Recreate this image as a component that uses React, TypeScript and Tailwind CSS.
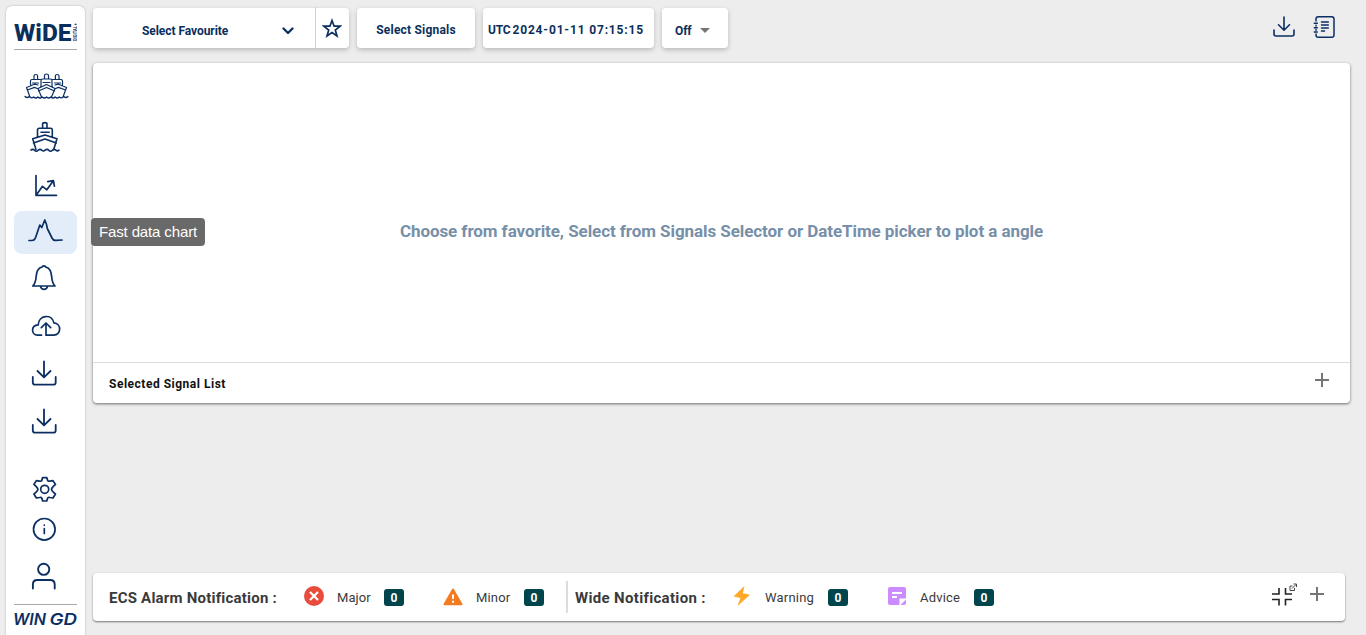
import type { ReactNode } from "react";

type IconProps = { box: string; w: number; h: number; children: ReactNode; sw?: number };

function Icon({ box, w, h, children, sw = 1.8 }: IconProps) {
  return (
    <svg
      width={w}
      height={h}
      viewBox={box}
      className="block shrink-0"
      fill="none"
      stroke="#0b2f63"
      strokeWidth={sw}
      strokeLinecap="round"
      strokeLinejoin="round"
    >
      {children}
    </svg>
  );
}

function Download() {
  return (
    <Icon box="0 0 63 48" w={63} h={48}>
      <path d="M30 11.500v15.500M23.500 21l6.500 6.300l6.500-6.300M18.800 27v5.500q0 2.200 2.200 2.200h18.500q2.200 0 2.200-2.200v-5.500" />
    </Icon>
  );
}

function Plus() {
  return (
    <svg width="14" height="14" viewBox="0 0 14 14" className="block shrink-0">
      <path d="M7 0v14M0 7h14" stroke="#757575" strokeWidth="2" />
    </svg>
  );
}

function Count() {
  return (
    <span className="flex h-[17px] w-5 shrink-0 items-center justify-center rounded-[3px] bg-[#00454b] pt-px text-[12px] font-bold text-white">
      0
    </span>
  );
}

function Sidebar() {
  return (
    <nav className="flex h-[640px] w-[79px] shrink-0 flex-col items-center rounded-md bg-white shadow-[0_0_2px_rgba(0,0,0,0.3)]">
      <svg width="63" height="43" viewBox="14 6 63 43" className="block shrink-0" fill="#0b2f5c" fontFamily="Roboto, sans-serif">
        <text x="14" y="40.800" fontSize="24.800" fontWeight="800" textLength="57.500" lengthAdjust="spacingAndGlyphs">WiDE</text>
        <text transform="translate(76.600 41) rotate(-90)" fontSize="5" fontWeight="700" textLength="18" lengthAdjust="spacingAndGlyphs">DIGITAL +</text>
      </svg>
      <div className="h-px w-[63px] shrink-0 bg-[#a9a9a9]" />
      <Icon box="14 50 63 62" w={63} h={62} sw={1.200}>
        <path d="M44.500 79v-3.500q0-1.500 2-1.500t2 1.500V79M41 87v-6.500q0-1.500 1.500-1.500h8q1.500 0 1.500 1.500V87M43 82.500h7M46.500 84.500l-8.500 4l3.500 8.500M46.500 84.500l8.500 4l-3.500 8.500M38.500 91l8-3.500l8 3.500" />
        <path d="M34 79v-3q0-1.500 1.800-1.500t1.800 1.500v3M30.500 86v-5q0-1.500 1.500-1.500h8.500M32.500 83h6M38 85l-3.500-.8l-8 3.300l3.300 9M27.500 90l7-2.600l3.500 1.300" />
        <path d="M59 79v-3q0-1.500-1.800-1.500t-1.800 1.500v3M62.500 86v-5q0-1.500-1.500-1.500h-8.500M60.500 83h-6M55 85l3.500-.8l8 3.300l-3.300 9M65.500 90l-7-2.600l-3.500 1.300" />
        <path d="M25 96.500q2 2 4.300 0q2.200 2.500 4.300.5q2.200 2 4.300 0q2.200 2 4.300 0q2.200 2 4.300 0q2.200 2 4.300 0q2.200 2 4.300 0q2.200 2 4.300 0q2.200 2 4.300-.5q2.300 2 4.300 0" />
      </Icon>
      <Icon box="14 112 63 51" w={63} h={51} sw={1.600}>
        <path d="M42.600 128v-4q0-1.400 2.200-1.400t2.200 1.400v4M37.500 137v-7q0-1.800 1.800-1.800h11.200q1.800 0 1.800 1.800v7M41 132.300h8.200M36 149.500l-3.300-10.700L45 135l12 3.800l-3.300 10.700M33.500 143L45 139l11.300 4" />
        <path d="M31 150q2-1.500 3.500.2q1.800 2 3.700 0q1.800-1.600 3.500 0q1.800 1.600 3.500 0q1.800-1.600 3.500 0q1.800 2 3.700 0q1.800-1.600 3.500 0q1.500 1.300 3.100 0" />
      </Icon>
      <Icon box="14 163 63 48" w={63} h={48} sw={1.700}>
        <path d="M36 175.500V195.300H56.500M37 194l5.500-7.700l4.300 3.500l6.400-8.800M47.800 181.600l5.600-1l1 5.600" />
      </Icon>
      <div className="shrink-0 rounded-lg bg-[#e3edf9]">
        <Icon box="14 211 63 43" w={63} h={43} sw={1.700}>
          <path d="M29 240.500h3q2.500 0 3.700-3.300l4.100-12.200l2 2.500l3-7.500l1.700 4.500l.8 4l4.700 9.500q1.400 2.800 4 2.300l6-.3" />
        </Icon>
      </div>
      <Icon box="14 254 63 48" w={63} h={48} sw={1.700}>
        <path d="M32.800 286h22.200q-2.800-3-3.300-9c-.5-7-3.500-9.500-6-10q-.2-1.200-1.800-1.200t-1.800 1.200c-2.500.5-5.500 3-6 10q-.5 6-3.300 9M40.500 286.500q.8 2.800 3.500 2.800t3.500-2.800" />
      </Icon>
      <Icon box="14 302 63 48" w={63} h={48} sw={1.700}>
        <path d="M41.500 335.200h-4c-6.600-.4-6.800-9.700.7-10.300c.3-10 13.800-11.500 15.700-2c7.600.5 7.800 11.700-.3 12.300h-7.600V323.300M41.300 327.600l4.700-4.600l4.700 4.600" />
      </Icon>
      <Download />
      <Download />
      <Icon box="14 446 63 64" w={63} h={64} sw={1.700}>
        <circle cx="44.700" cy="489.300" r="4" />
        <path transform="translate(31.100 476.300) scale(1.133 1.083)" strokeWidth="1.570" d="M9.600 3.200L10.200 1.200H13.800L14.400 3.200Q14.800 5 16.500 4.400L19.300 4L21.500 7.500L19.600 9.300Q18 11 18 12Q18 13 19.600 14.700L21.500 16.500L19.300 20L16.500 19.600Q14.800 19 14.400 20.800L13.800 22.800H10.200L9.600 20.800Q9.200 19 7.500 19.600L4.700 20L2.500 16.500L4.400 14.700Q6 13 6 12Q6 11 4.400 9.300L2.500 7.500L4.700 4L7.500 4.400Q9.200 5 9.600 3.200Z" />
      </Icon>
      <Icon box="14 510 63 42" w={63} h={42} sw={1.700}>
        <circle cx="44.300" cy="529.300" r="10.800" />
        <path d="M44.300 528.500v5M44.300 525v.2" />
      </Icon>
      <Icon box="14 552 63 52" w={63} h={52} sw={1.900}>
        <circle cx="43.700" cy="569.300" r="5.600" />
        <path d="M32.900 588.500v-4q0-4.500 4.500-4.500h12.800q4.500 0 4.500 4.500v4" />
      </Icon>
      <div className="h-px w-[63px] shrink-0 bg-[#a9a9a9]" />
      <svg width="63" height="30" viewBox="14 605 63 30" className="block shrink-0" fill="#0b2f63" fontFamily="Inter, sans-serif">
        <text x="13" y="625" fontSize="16.300" fontWeight="600" fontStyle="italic" textLength="33" lengthAdjust="spacingAndGlyphs">WIN</text>
        <text x="49.500" y="625" fontSize="16.300" fontWeight="600" fontStyle="italic" textLength="27.500" lengthAdjust="spacingAndGlyphs">GD</text>
      </svg>
    </nav>
  );
}

const card = "flex h-10 shrink-0 items-center rounded bg-white shadow-[0_2px_5px_rgba(0,0,0,0.22)]";

function Toolbar() {
  return (
    <header className="flex h-[42px] items-start gap-2 text-[12px] font-bold text-[#0b2f5c]">
      <div className={card + " w-64"}>
        <div className="flex h-10 w-[222px] items-center pt-[5px] pl-[49px]">
          <span className="w-[139px] whitespace-nowrap tracking-[-0.06px]">Select Favourite</span>
          <Icon box="0 0 14 10" w={14} h={10} sw={2.300}><path d="M2.500 2.500l4.500 4.500l4.500-4.500" /></Icon>
        </div>
        <div className="h-[43px] w-px bg-[#d2d2d2]" />
        <div className="flex flex-1 justify-center pr-0.5">
          <svg width="20" height="20" viewBox="0 0 20 20" fill="none" stroke="#0b2f63" strokeWidth="1.700" strokeLinejoin="miter">
            <path d="M10 2.500l2.100 5.700h6l-4.800 3.800l1.700 6L10 14.600L5 18l1.700-6L1.900 8.200h6z" />
          </svg>
        </div>
      </div>
      <div className={card + " w-[118px] justify-center pt-[3px]"}><span className="whitespace-nowrap tracking-[0.2px]">Select Signals</span></div>
      <div className={card + " w-[171px] gap-[2px] pt-[3px] pl-[5px]"}>
        <span className="tracking-[-0.2px]">UTC</span>
        <span className="whitespace-nowrap text-[12px] tracking-[0.84px]">2024-01-11 07:15:15</span>
      </div>
      <div className={card + " w-[66px] gap-[9px] pt-[5px] pl-[13px]"}>
        <span className="w-[16px] tracking-[-0.1px]">Off</span>
        <svg width="10" height="5" viewBox="0 0 10 5"><path d="M0 0h10L5 5z" fill="#757575" /></svg>
      </div>
      <div className="ml-auto flex gap-[14px] pt-[5px] pr-[29px]">
        <Icon box="0 0 26 28" w={26} h={28} sw={1.600}>
          <path d="M13 4v13M7.500 11.800l5.500 5.400l5.500-5.400M3 17v4q0 2 2 2h16q2 0 2-2v-4" />
        </Icon>
        <Icon box="0 0 26 28" w={26} h={28} sw={1.500}>
          <path d="M5 8V6q0-2.300 2.300-2.300h13.400Q23 3.700 23 6v16q0 2.300-2.300 2.300H7.300Q5 24.300 5 22v-1M5 12.300v.8M5 16.500v.8M3.300 10.300h3M3.300 14.800h3M3.300 19h3M10.500 9h6.800M10.500 12h6.800M10.500 15h6.800M10.500 18h3" />
        </Icon>
      </div>
    </header>
  );
}

function NotificationBar() {
  return (
    <footer className="flex h-12 w-[1252px] shrink-0 items-center rounded bg-white pl-4 text-[13px] text-[#3a3a3a] shadow-[0_1px_2px_rgba(0,0,0,0.5)]">
      <strong className="w-[194px] pt-0.5 whitespace-nowrap text-[15px] tracking-[0.22px]">ECS Alarm Notification :</strong>
      <svg width="22" height="22" viewBox="0 0 22 22" className="mb-[3px]">
        <circle cx="11" cy="11" r="10" fill="#e84c3d" />
        <path d="M7 7l8 8M15 7l-8 8" stroke="#fff" strokeWidth="2.200" />
      </svg>
      <span className="ml-3 w-[47px] pt-0.5 tracking-[0.1px]">Major</span>
      <Count />
      <svg width="20" height="18" viewBox="0 0 20 18" className="ml-[39px]">
        <path d="M10 1.500L18.500 16.200h-17z" fill="#f47b20" stroke="#f47b20" strokeWidth="2" strokeLinejoin="round" />
        <path d="M10 6.500v4.500M10 12.700v2" stroke="#fff" strokeWidth="2" />
      </svg>
      <span className="ml-[13px] w-12 pt-0.5 tracking-[0.15px]">Minor</span>
      <Count />
      <div className="ml-[22px] h-8 w-0.5 bg-[#dcdcdc]" />
      <strong className="ml-[7px] w-[158px] pt-0.5 whitespace-nowrap text-[15px] tracking-[0.33px]">Wide Notification :</strong>
      <svg width="18" height="20" viewBox="0 0 18 20" className="mb-[3px]">
        <path d="M11.500 0L.5 10.500L7.500 12L4.500 20L17 8.800L9.800 7.300z" fill="#ffa726" />
      </svg>
      <span className="ml-3.5 w-[63px] pt-0.5 tracking-[0.2px]">Warning</span>
      <Count />
      <svg width="18" height="18" viewBox="0 0 18 18" className="mb-[3px] ml-10">
        <path d="M2 0h14q2 0 2 2v9l-7 7H2q-2 0-2-2V2q0-2 2-2z" fill="#cc8bff" />
        <path d="M4 6h10M4 10h5" stroke="#fff" strokeWidth="1.800" />
        <path d="M11.500 18v-6.500H18z" fill="#fff" />
        <path d="M12.500 18L18 12.500V16q0 2-2 2z" fill="#cc8bff" />
      </svg>
      <span className="ml-[14px] w-[54px] pt-0.5 tracking-[0.2px]">Advice</span>
      <Count />
      <svg width="28" height="26" viewBox="0 0 28 26" fill="none" className="mb-[3px] ml-auto">
        <path d="M1 11h7V5M21 11h-6.500V5M1 16.500h7v6M21 16.500h-6.500v6" stroke="#222" strokeWidth="1.600" />
        <path d="M21.500 3H19v4.500h4.500V5M21 5.500l4-4M22.500 1h3v3" stroke="#444" strokeWidth="1" />
      </svg>
      <div className="mr-[21px] mb-1.5 ml-[11px]"><Plus /></div>
    </footer>
  );
}

export default function App() {
  return (
    <div className="flex h-[635px] w-[1366px] gap-2 overflow-hidden bg-[#ededed] pt-1.5 pl-1.5 font-['Roboto',sans-serif]">
      <Sidebar />
      <main className="flex min-w-0 flex-1 flex-col pt-0.5 pb-3.5">
        <Toolbar />
        <section className="mt-[13px] flex h-[340px] w-[1257px] shrink-0 flex-col rounded bg-white shadow-[0_1px_3px_rgba(0,0,0,0.55)]">
          <div className="flex h-[299px] items-center justify-center pt-[39px]">
            <p className="whitespace-nowrap text-[17px] font-bold tracking-[-0.07px] text-[#778fa8]">Choose from favorite, Select from Signals Selector or DateTime picker to plot a angle</p>
          </div>
          <div className="flex h-[41px] items-center justify-between border-t border-[#dcdcdc] pr-[21px] pl-4">
            <span className="pt-0.5 text-[12px] font-bold tracking-[0.51px] text-[#111]">Selected Signal List</span>
            <div className="mb-1.5"><Plus /></div>
          </div>
        </section>
        <div className="flex-1" />
        <NotificationBar />
      </main>
      <div className="absolute top-[218px] left-[91px] flex h-7 w-[114px] items-center justify-center rounded bg-[#696969] font-['Liberation_Sans',sans-serif] text-[15px] text-white">
        <span className="whitespace-nowrap tracking-[-0.13px]">Fast data chart</span>
      </div>
    </div>
  );
}
